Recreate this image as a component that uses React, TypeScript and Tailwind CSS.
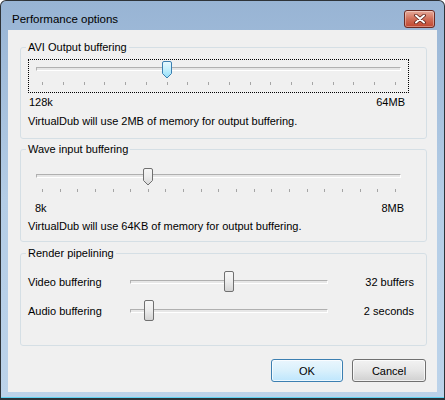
import React from "react";

const font = { fontFamily: '"Liberation Sans", Arial, sans-serif' };

const DownThumb: React.FC<{ blue?: boolean }> = ({ blue }) => (
  <svg width="10" height="18" viewBox="0 0 10 18">
    <defs>
      <linearGradient id={blue ? "tb" : "tg"} x1="0" y1="0" x2="0" y2="1">
        <stop offset="0" stopColor={blue ? "#e8f9fe" : "#f7f7f7"} />
        <stop offset="0.5" stopColor={blue ? "#c3effd" : "#ececec"} />
        <stop offset="1" stopColor={blue ? "#8fdcf7" : "#d6d6d6"} />
      </linearGradient>
    </defs>
    <path
      d="M0.5 2 Q0.5 0.5 2 0.5 H8 Q9.5 0.5 9.5 2 V12.5 L5 17 L0.5 12.5 Z"
      fill={`url(#${blue ? "tb" : "tg"})`}
      stroke={blue ? "#3c7fb1" : "#707070"}
    />
  </svg>
);

const TickSlider: React.FC<{ ticks: number; index: number; focus?: boolean; blue?: boolean }> = ({
  ticks,
  index,
  focus,
  blue,
}) => {
  const left = Math.round(13 + (index * 353) / (ticks - 1)) - 5;
  return (
    <div
      className={`relative h-[34px] w-[381px] border border-dotted ${
        focus ? "border-black" : "border-transparent"
      }`}
    >
      <div className="absolute left-[7px] top-[7px] h-[4px] w-[365px] border border-[#b0b0b0] border-b-white border-r-white bg-[#e7e7e7]" />
      <div className="absolute left-[13px] top-[22px] flex w-[354px] justify-between">
        {Array.from({ length: ticks }).map((_, i) => (
          <div key={i} className="h-[3px] w-px bg-[#a5a5a5]" />
        ))}
      </div>
      <div className="absolute top-[1px]" style={{ left }}>
        <DownThumb blue={blue} />
      </div>
    </div>
  );
};

const PlainSlider: React.FC<{ left: number }> = ({ left }) => (
  <div className="relative h-[21px] w-[198px] shrink-0">
    <div className="absolute left-0 top-[9px] h-[4px] w-full border border-[#b0b0b0] border-b-white border-r-white bg-[#e7e7e7]" />
    <div
      className="absolute top-0 h-[21px] w-[10px] rounded-[2px] border border-[#707070] bg-linear-to-b from-[#f7f7f7] via-[#ececec] to-[#d4d4d4]"
      style={{ left }}
    />
  </div>
);

const Group: React.FC<{ title: string; className: string; children: React.ReactNode }> = ({
  title,
  className,
  children,
}) => (
  <fieldset className={`ml-[12px] w-[407px] rounded-[3px] border border-[#d5dfe5] px-[7px] ${className}`}>
    <legend className="-ml-[2px] px-[2px] text-[11px] leading-[16px]">{title}</legend>
    {children}
  </fieldset>
);

const App: React.FC = () => {
  return (
    <div
      className="flex h-[400px] w-[445px] flex-col overflow-hidden rounded-t-[6px] border border-b-2 border-[#2e3338] bg-linear-to-b from-[#98b4d4] via-[#b4cde6] to-[#bcd3ea] text-black"
      style={font}
    >
      <div className="flex h-[29px] shrink-0 items-start justify-between">
        <span className="ml-[11px] mt-[10px] text-[11.5px] leading-[16px]">Performance options</span>
        <button className="mr-[9px] mt-[9px] flex h-[18px] w-[31px] items-center justify-center rounded-[3px] border border-[#6b2a22] bg-linear-to-b from-[#e6aa9a] via-[#d06e58] to-[#c0452e] shadow-[inset_0_0_0_1px_rgba(255,255,255,0.35)]">
          <svg width="12" height="10" viewBox="0 0 12 10">
            <path d="M2 1.5 L10 8.5 M10 1.5 L2 8.5" stroke="#5a2018" strokeWidth="3.6" strokeLinecap="round" />
            <path d="M2 1.5 L10 8.5 M10 1.5 L2 8.5" stroke="#ffffff" strokeWidth="2" strokeLinecap="round" />
          </svg>
        </button>
      </div>

      <div className="ml-[7px] flex h-[362px] w-[429px] shrink-0 flex-col bg-[#f0f0f0] text-[11px] leading-[16px]">
        <Group title="AVI Output buffering" className="mt-[9px] h-[100px]">
          <div className="mt-[4px]">
            <TickSlider ticks={18} index={6} focus blue />
          </div>
          <div className="mt-[1px] flex w-[381px] justify-between pl-[1px] pr-[4px]">
            <span>128k</span>
            <span>64MB</span>
          </div>
          <div className="mt-[3px]">VirtualDub will use 2MB of memory for output buffering.</div>
        </Group>

        <Group title="Wave input buffering" className="mt-[2px] h-[101px]">
          <div className="mt-[9px]">
            <TickSlider ticks={21} index={6} />
          </div>
          <div className="flex w-[381px] justify-between pl-[7px] pr-[5px]">
            <span>8k</span>
            <span>8MB</span>
          </div>
          <div className="mt-[2px]">VirtualDub will use 64KB of memory for output buffering.</div>
        </Group>

        <Group title="Render pipelining" className="mt-[3px] h-[101px]">
          <div className="mt-[10px] flex h-[21px] items-center pr-[5px]">
            <span className="w-[102px] shrink-0">Video buffering</span>
            <PlainSlider left={94} />
            <span className="flex-1 text-right">32 buffers</span>
          </div>
          <div className="mt-[8px] flex h-[21px] items-center pr-[5px]">
            <span className="w-[102px] shrink-0">Audio buffering</span>
            <PlainSlider left={14} />
            <span className="flex-1 text-right">2 seconds</span>
          </div>
        </Group>

        <div className="mt-[13px] flex justify-end gap-[9px] pr-[11px]">
          <button className="h-[23px] w-[72px] shrink-0 rounded-[3px] border border-[#3c7fb1] bg-linear-to-b from-[#eaf6fd] via-[#d9f0fc] to-[#bee6fd] shadow-[inset_0_0_0_1px_rgba(255,255,255,0.7)]">
            OK
          </button>
          <button className="h-[23px] w-[74px] shrink-0 rounded-[3px] border border-[#707070] bg-linear-to-b from-[#f2f2f2] via-[#e6e6e6] to-[#d0d0d0] shadow-[inset_0_0_0_1px_rgba(255,255,255,0.7)]">
            Cancel
          </button>
        </div>
      </div>

      <div className="mt-auto h-px shrink-0 bg-[#5fd3f2]" />
    </div>
  );
};

export default App;
